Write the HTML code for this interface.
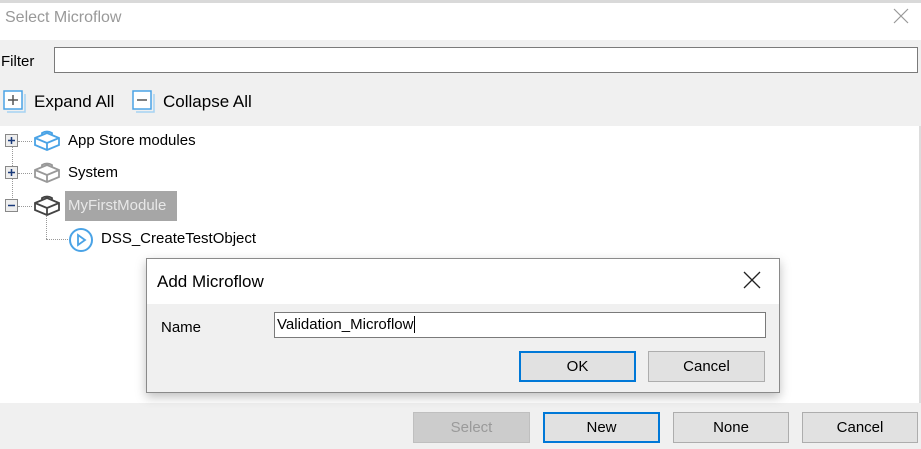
<!DOCTYPE html>
<html><head><meta charset="utf-8"><style>
*{box-sizing:border-box;margin:0;padding:0}
body{width:921px;height:449px;overflow:hidden;background:#fff;font-family:"Liberation Sans",Arial,sans-serif;position:relative;font-size:15px;color:#000}
.a{position:absolute}
.btn{position:absolute;background:#e1e1e1;border:1px solid #adadad;text-align:center;font-size:15px;line-height:29px}
.btn.def{border:2px solid #0078d7;line-height:27px}
</style></head><body>
<div class="a" style="left:0;top:0;width:921px;height:3px;background:#d9d9d9"></div>
<div class="a" style="left:5px;top:9px;font-size:16px;color:#999">Select Microflow</div>
<svg class="a" style="left:893px;top:8px" width="16" height="16"><path d="M1 1L15 15M15 1L1 15" stroke="#999" stroke-width="1.2"/></svg>
<div class="a" style="left:0;top:40px;width:921px;height:86px;background:#f0f0f0"></div>
<div class="a" style="left:1px;top:53px;font-size:15px">Filter</div>
<div class="a" style="left:54px;top:47px;width:864px;height:26px;background:#fff;border:1px solid #7a7a7a"></div>
<svg class="a" style="left:3px;top:90px" width="24" height="24"><rect x="1" y="1" width="18" height="18" fill="#fff" stroke="#4aa3e6" stroke-width="1.5"/><path d="M5 10H15M10 5V15" stroke="#555" stroke-width="1.5"/><path d="M4 22H22V4" fill="none" stroke="#a6d2f2" stroke-width="1.5"/></svg>
<div class="a" style="left:34px;top:92px;font-size:17px">Expand All</div>
<svg class="a" style="left:132px;top:90px" width="24" height="24"><rect x="1" y="1" width="18" height="18" fill="#fff" stroke="#4aa3e6" stroke-width="1.5"/><path d="M5 10H15" stroke="#555" stroke-width="1.5"/><path d="M4 22H22V4" fill="none" stroke="#a6d2f2" stroke-width="1.5"/></svg>
<div class="a" style="left:163px;top:92px;font-size:17px">Collapse All</div>
<div class="a" style="left:919px;top:126px;width:2px;height:280px;background:#ddd"></div>
<!-- tree lines -->
<div class="a" style="left:12px;top:146px;height:58px;border-left:1px dotted #999"></div>
<div class="a" style="left:46px;top:214px;height:25px;border-left:1px dotted #999"></div>
<div class="a" style="left:46px;top:239px;width:22px;border-top:1px dotted #999"></div>
<div class="a" style="left:18px;top:141px;width:14px;border-top:1px dotted #999"></div>
<div class="a" style="left:18px;top:173px;width:14px;border-top:1px dotted #999"></div>
<div class="a" style="left:18px;top:206px;width:14px;border-top:1px dotted #999"></div>
<svg class="a" style="left:5px;top:134px" width="14" height="14"><rect x=".5" y=".5" width="12" height="12" fill="#eee" stroke="#888"/><path d="M3 6.5H10M6.5 3V10" stroke="#1a3a7a" stroke-width="1.5"/></svg>
<svg class="a" style="left:5px;top:166px" width="14" height="14"><rect x=".5" y=".5" width="12" height="12" fill="#eee" stroke="#888"/><path d="M3 6.5H10M6.5 3V10" stroke="#1a3a7a" stroke-width="1.5"/></svg>
<svg class="a" style="left:5px;top:199px" width="14" height="14"><rect x=".5" y=".5" width="12" height="12" fill="#eee" stroke="#888"/><path d="M3 6.5H10" stroke="#1a3a7a" stroke-width="1.5"/></svg>
<svg class="a" style="left:33px;top:130px" width="28" height="22"><path d="M2 8L14 3L26 8V15L14 20L2 15Z M2 8L14 13L26 8M14 13V20 M9 5L9 3Q14 0 19 3V5" fill="none" stroke="#4aa3e6" stroke-width="1.8"/></svg>
<svg class="a" style="left:33px;top:162px" width="28" height="22"><path d="M2 8L14 3L26 8V15L14 20L2 15Z M2 8L14 13L26 8M14 13V20 M9 5L9 3Q14 0 19 3V5" fill="none" stroke="#999" stroke-width="1.8"/></svg>
<svg class="a" style="left:33px;top:195px" width="28" height="22"><path d="M2 8L14 3L26 8V15L14 20L2 15Z M2 8L14 13L26 8M14 13V20 M9 5L9 3Q14 0 19 3V5" fill="none" stroke="#444" stroke-width="1.8"/></svg>
<div class="a" style="left:68px;top:132px;font-size:15px">App Store modules</div>
<div class="a" style="left:68px;top:164px;font-size:15px">System</div>
<div class="a" style="left:65px;top:191px;width:112px;height:30px;background:#a6a6a6"></div>
<div class="a" style="left:68px;top:197px;font-size:15px;color:#e8e8e8">MyFirstModule</div>
<svg class="a" style="left:68px;top:227px" width="26" height="26"><circle cx="13" cy="13" r="11" fill="#fff" stroke="#4aa3e6" stroke-width="2"/><path d="M10 8L17 13L10 18Z" fill="none" stroke="#4aa3e6" stroke-width="1.8"/></svg>
<div class="a" style="left:101px;top:230px;font-size:15px">DSS_CreateTestObject</div>
<!-- bottom bar -->
<div class="a" style="left:0;top:403px;width:921px;height:46px;background:#f0f0f0"></div>
<div class="btn" style="left:413px;top:412px;width:117px;height:31px;background:#ccc;border-color:#bfbfbf;color:#9a9a9a">Select</div>
<div class="btn def" style="left:543px;top:412px;width:117px;height:31px">New</div>
<div class="btn" style="left:673px;top:412px;width:116px;height:31px">None</div>
<div class="btn" style="left:802px;top:412px;width:116px;height:31px">Cancel</div>
<!-- modal -->
<div class="a" style="left:146px;top:258px;width:634px;height:135px;border:1px solid #8a8a8a;background:#f0f0f0;box-shadow:0 4px 10px rgba(0,0,0,.25)">
<div style="position:absolute;left:0;top:0;width:632px;height:45px;background:#fff"></div>
<div style="position:absolute;left:10px;top:13px;font-size:17px">Add Microflow</div>
<svg style="position:absolute;left:596px;top:12px" width="18" height="18"><path d="M1 1L17 17M17 1L1 17" stroke="#222" stroke-width="1.3"/></svg>
<div style="position:absolute;left:14px;top:60px;font-size:15px">Name</div>
<div style="position:absolute;left:127px;top:53px;width:492px;height:26px;background:#fff;border:1px solid #7a7a7a;padding:3px 2px;font-size:15px">Validation_Microflow<span style="border-left:1px solid #000;margin-left:1px"></span></div>
<div class="btn def" style="left:372px;top:92px;width:117px;height:31px">OK</div>
<div class="btn" style="left:501px;top:92px;width:117px;height:31px">Cancel</div>
</div>
</body></html>
